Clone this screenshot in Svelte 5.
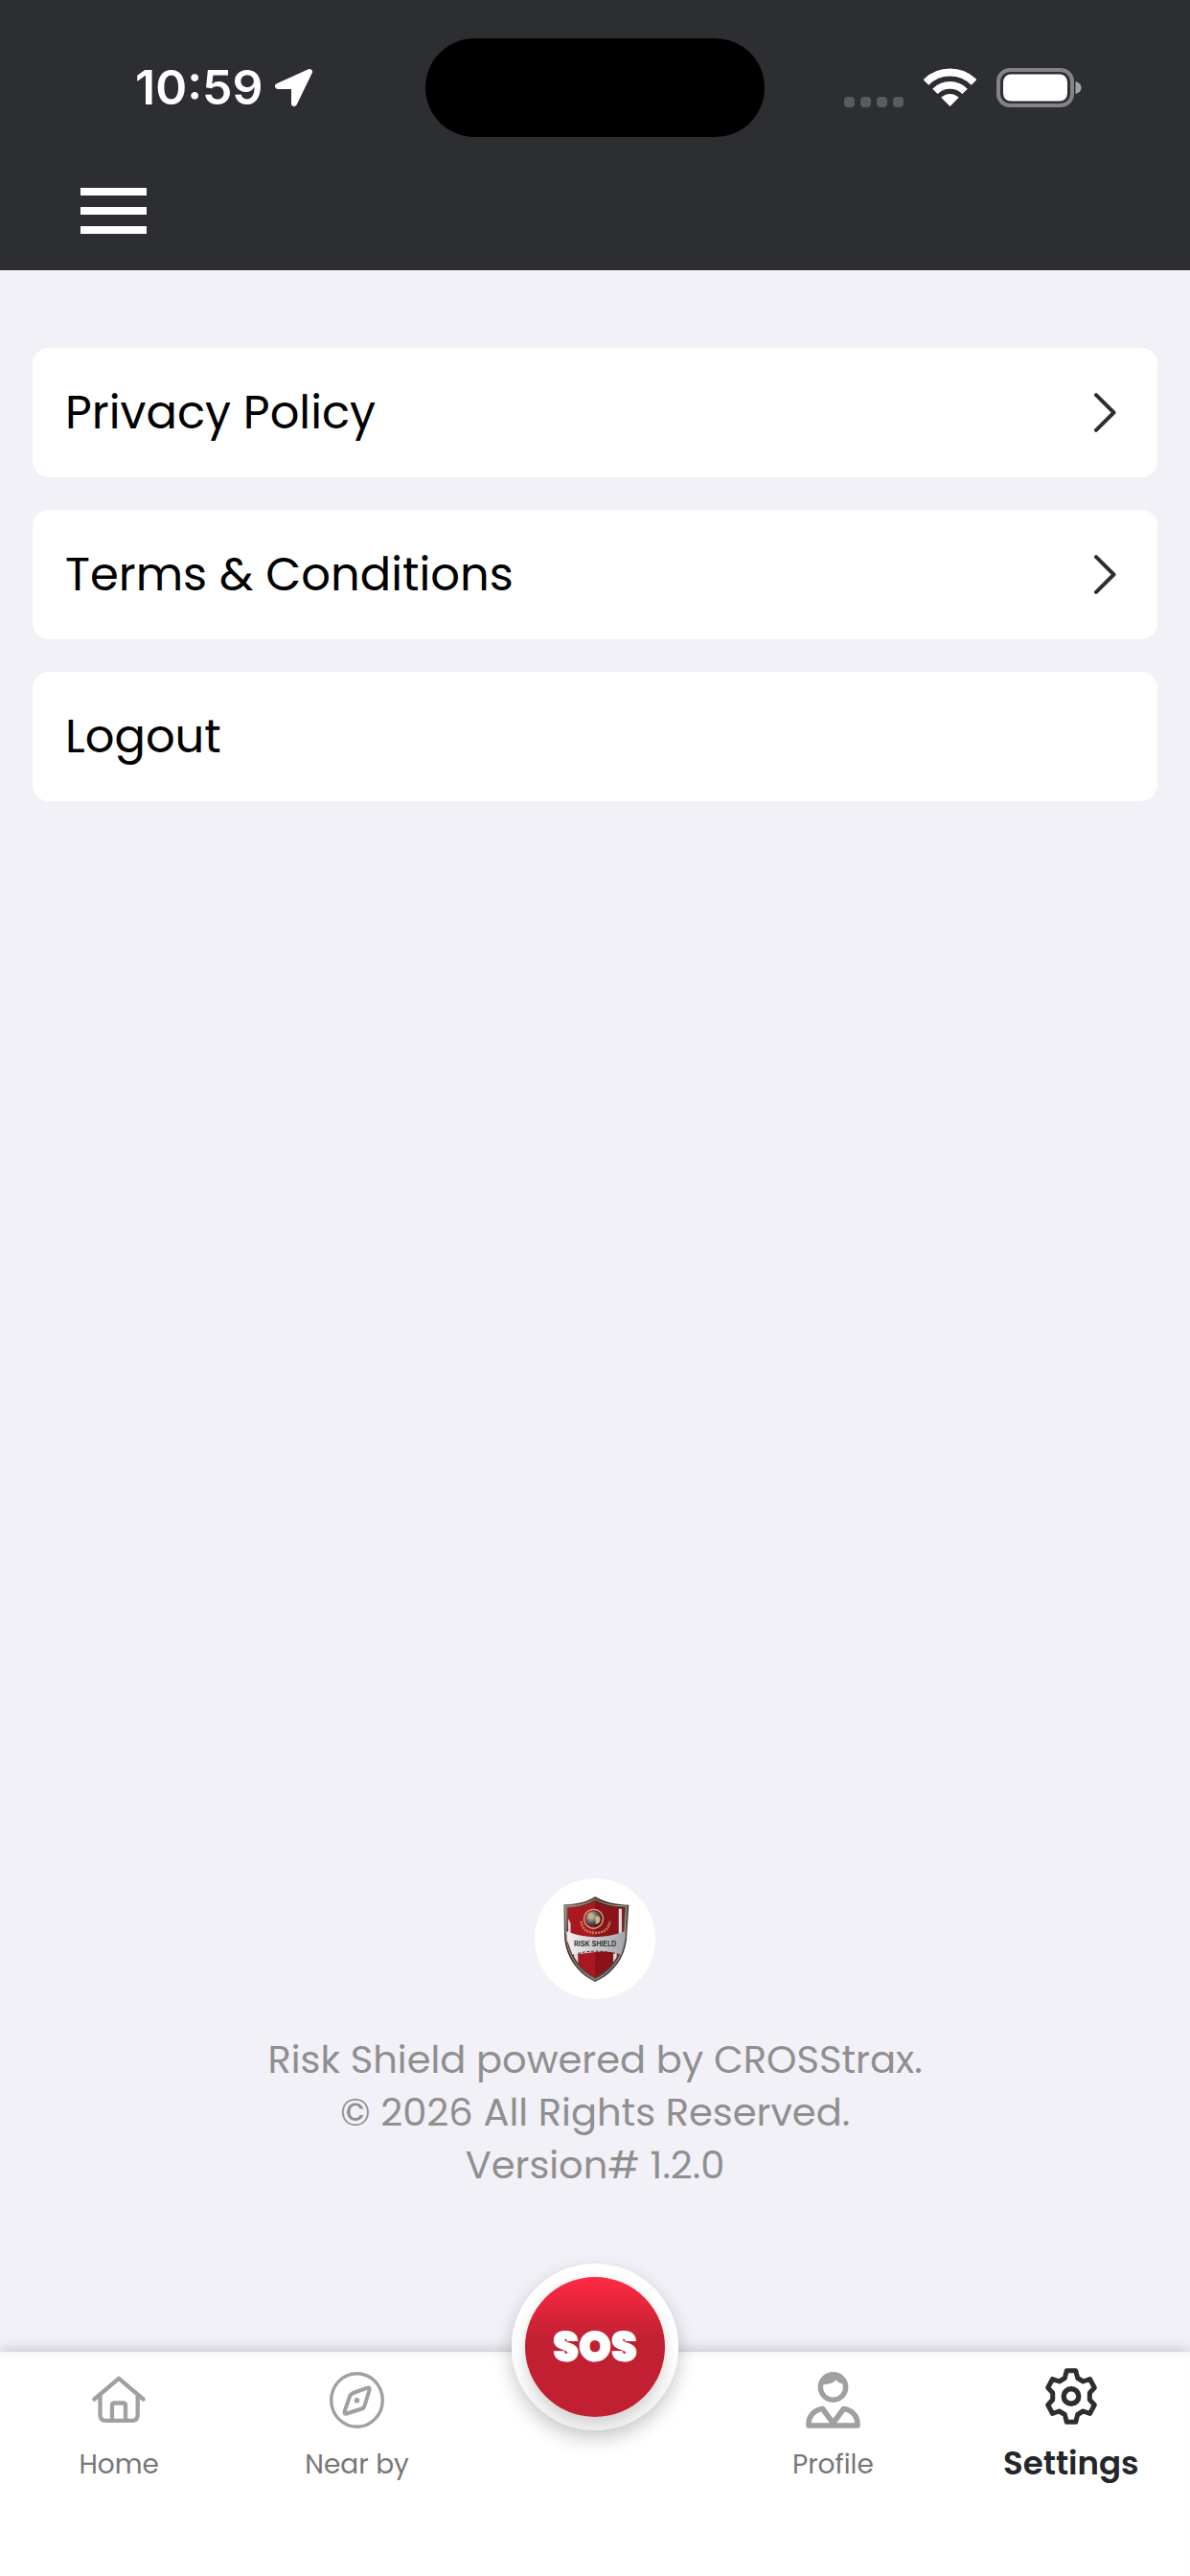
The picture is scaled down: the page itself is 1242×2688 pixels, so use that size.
<script lang="ts">
	const rows = [
		{ label: 'Privacy Policy', href: '#privacy' },
		{ label: 'Terms & Conditions', href: '#terms' }
	];
</script>

<svelte:head>
	<title>Settings</title>
</svelte:head>

<div class="app">
	<header>
		<div class="status">
			<div class="status-left">
				<span class="time">10:59</span>
				<svg class="location" viewBox="0 0 39 39" width="39" height="39" aria-hidden="true">
					<path d="M36 3 3 18H20V36Z" />
				</svg>
			</div>
			<div class="island"></div>
			<div class="status-right">
				<div class="signal"><i></i><i></i><i></i><i></i></div>
				<svg class="wifi" viewBox="0 0 55 40" width="55" height="40" aria-hidden="true">
					<path d="M2.4 14.9a35.5 35.5 0 0 1 50.2 0" stroke-width="8" />
					<path d="M11.9 24.4a22 22 0 0 1 31.2 0" stroke-width="7.6" />
					<path class="solid" d="M27.5 40 18.3 30.8a13 13 0 0 1 18.4 0Z" />
				</svg>
				<svg viewBox="0 0 89 41" width="89" height="41" aria-hidden="true">
					<rect x="2" y="2" width="77" height="37" rx="12" fill="none" stroke="#838488" stroke-width="4" />
					<rect x="7" y="6.5" width="67" height="28" rx="8" fill="#fff" />
					<path d="M82.500 14q6 1.500 6 6.500t-6 6.500Z" fill="#a2a3a8" />
				</svg>
			</div>
		</div>
		<button class="menu" type="button" aria-label="Menu">
			<span></span><span></span><span></span>
		</button>
	</header>

	<main>
		{#each rows as row}
			<a class="row" href={row.href}>
				{row.label}
				<svg viewBox="0 0 23 41" width="23" height="41" aria-hidden="true">
					<path d="M2 2.200 20.500 20.500 2 38.800" />
				</svg>
			</a>
		{/each}
		<button class="row" type="button">Logout</button>
	</main>

	<footer>
		<div class="logo">
			<svg viewBox="138 110 214 272" width="71" height="91" role="img" aria-label="Risk Shield">
				<defs>
					<linearGradient id="rim" x1="0" y1="0" x2="1" y2="1">
						<stop offset="0" stop-color="#8a8a8c" />
						<stop offset="0.3" stop-color="#3a2622" />
						<stop offset="0.7" stop-color="#55565a" />
						<stop offset="1" stop-color="#1c1c1e" />
					</linearGradient>
					<linearGradient id="band" x1="0" y1="0" x2="1" y2="0">
						<stop offset="0" stop-color="#f2f2f2" />
						<stop offset="0.5" stop-color="#c9c9cb" />
						<stop offset="1" stop-color="#a3a4a7" />
					</linearGradient>
					<radialGradient id="globe" cx="0.35" cy="0.35" r="0.7">
						<stop offset="0" stop-color="#d8d3cb" />
						<stop offset="0.6" stop-color="#5b5550" />
						<stop offset="1" stop-color="#211d1c" />
					</radialGradient>
					<clipPath id="field">
						<path d="M244 126C217 142 187 146 158 147L159 235C161 295 199 343 244 367C291 343 329 295 331 235L335 147C303 146 271 142 244 126Z" />
					</clipPath>
				</defs>
				<path d="M244 112C217 130 181 136 145 137L147 235C150 306 193 357 244 380C297 357 341 306 344 235L350 138C309 137 273 130 244 112Z" fill="url(#rim)" />
				<path d="M244 120C217 137 184 142 151 142L153 235C156 301 196 350 244 373C294 350 335 301 337 235L342 142C307 142 272 137 244 120Z" fill="none" stroke="#c99877" stroke-width="3" />
				<g clip-path="url(#field)">
					<path d="M150 120H245V375H150Z" fill="#ab1720" />
					<path d="M244 120H340V375H244Z" fill="#8b1219" />
					<path d="M158 178 167 196V230H158ZM177 290H190V326L177 312ZM318 150H328V232H318ZM301 290H312V312L301 326Z" fill="#d9d9da" />
				</g>
				<path d="M154 221Q200 239 244 239T337 221L338 240 326 294Q286 282 244 287T172 294L156 250Z" fill="url(#band)" />
				<path d="M190 291Q244 277 306 291" fill="none" stroke="#4b1518" stroke-width="3" stroke-dasharray="9 5" />
				<circle cx="239" cy="182" r="30" fill="none" stroke="#d0a17f" stroke-width="4" />
				<circle cx="239" cy="182" r="25" fill="url(#globe)" />
				<path d="M222 169q10-10 15 0t-8 12zM244 177q13-10 16 4t-14 18z" fill="#d5ad83" />
				<path d="M200 190q4 36 45 36t45-36" fill="none" stroke="#b98159" stroke-width="8" stroke-dasharray="6 3" />
				<text x="244" y="269" text-anchor="middle">RISK SHIELD</text>
			</svg>
		</div>
		<p>
			Risk Shield powered by CROSStrax.<br />
			© 2026 All Rights Reserved.<br />
			Version# 1.2.0
		</p>
	</footer>

	<nav>
		<a class="tab" href="#home">
			<span class="icon">
				<svg viewBox="0 0 56 50" width="56" height="50" aria-hidden="true">
					<path d="M2.500 24.500 28 2.800 53.500 24.500M8.500 20V41q0 5.800 5.800 5.800h27.600q5.800 0 5.800-5.800V20M21 46V31q0-2.500 2.500-2.500h9q2.500 0 2.500 2.500V46" stroke-width="4.300" />
				</svg>
			</span>
			Home
		</a>
		<a class="tab" href="#nearby">
			<span class="icon">
				<svg viewBox="0 0 57 59" width="57" height="59" aria-hidden="true">
					<ellipse cx="28.500" cy="29.500" rx="26.800" ry="27.800" stroke-width="3.400" />
					<path d="M24.500 22 39.500 16.700Q42.300 16 41.500 19L36.500 35.500 35 38 18 43.500Q14.800 44.300 15.700 41L21.500 24.300Z" stroke-width="4" />
					<circle class="solid" cx="28.500" cy="29.800" r="2.800" />
				</svg>
			</span>
			Near by
		</a>
		<div class="sos-slot">
			<div class="sos-ring">
				<button class="sos" type="button">SOS</button>
			</div>
		</div>
		<a class="tab" href="#profile">
			<span class="icon">
				<svg viewBox="0 0 57 59" width="57" height="59" aria-hidden="true">
					<circle cx="28.500" cy="16" r="13.200" stroke-width="5.400" />
					<path class="solid" d="M16 13Q26 14 31.500 8.500 35 13 41 12.500L36 4H20Z" />
					<path d="M3 54.500C3 46 9 39.500 17.500 38.500L28.500 53.500 39.500 38.500C48 39.500 54 46 54 54.500V56H3Z" stroke-width="5.600" />
				</svg>
			</span>
			Profile
		</a>
		<a class="tab active" href="#settings" aria-current="page">
			<span class="icon">
				<svg viewBox="0 0 54 59" width="54" height="59" aria-hidden="true">
					<path d="M22.300 2.700H31.700L33.700 10.500 39.500 14 46.500 11.500 51.300 20.500 46.300 26V33L51.300 38.500 46.500 47.500 39.500 45 33.700 48.500 31.700 56.300H22.300L20.300 48.500 14.500 45 7.500 47.500 2.700 38.500 7.700 33V26L2.700 20.500 7.500 11.500 14.500 14 20.300 10.500Z" stroke-width="5" />
					<circle cx="27" cy="29.500" r="7.800" stroke-width="5.400" />
				</svg>
			</span>
			Settings
		</a>
	</nav>
</div>

<style>
	:global(body) {
		background: #f2f1f7;
	}
	.app {
		display: flex;
		flex-direction: column;
		min-height: 100vh;
		font-family: Poppins, Inter, sans-serif;
		color: #000;
	}
	header {
		background: #2d2e32;
		padding-bottom: 24px;
	}
	.status {
		display: grid;
		grid-template-columns: 1fr auto 1fr;
		align-items: center;
		height: 182px;
	}
	.status-left,
	.status-right {
		display: flex;
		align-items: center;
	}
	.status-left {
		gap: 12px;
		padding-left: 141px;
	}
	.time {
		font-family: Inter, sans-serif;
		font-size: 50px;
		font-weight: 600;
		line-height: 60px;
		color: #fff;
	}
	.location path {
		fill: #fff;
		stroke: #fff;
		stroke-width: 6;
		stroke-linejoin: round;
	}
	.island {
		width: 354px;
		height: 103px;
		border-radius: 52px;
		background: #000;
	}
	.status-right {
		justify-content: flex-end;
		gap: 21px;
		padding-right: 113px;
	}
	.signal {
		display: flex;
		align-self: flex-end;
		gap: 6px;
	}
	.signal i {
		width: 11px;
		height: 11px;
		border-radius: 4px;
		background: #5a5b5e;
	}
	.wifi path {
		fill: none;
		stroke: #fff;
	}
	.wifi .solid {
		fill: #fff;
		stroke: none;
	}
	.menu {
		display: flex;
		flex-direction: column;
		justify-content: center;
		gap: 12px;
		height: 76px;
		margin-left: 84px;
		padding: 0;
		border: 0;
		background: none;
	}
	.menu span {
		width: 69px;
		height: 8px;
		background: #fff;
	}
	main {
		display: flex;
		flex: 1;
		flex-direction: column;
		gap: 34px;
		padding: 81px 34px;
	}
	.row {
		display: flex;
		align-items: center;
		justify-content: space-between;
		height: 135px;
		padding: 0 43px 0 34px;
		border: 0;
		border-radius: 17px;
		background: #fff;
		color: #000;
		font-family: inherit;
		font-size: 48px;
		text-decoration: none;
	}
	.row path {
		fill: none;
		stroke: #2d2e32;
		stroke-width: 4;
		stroke-linecap: round;
		stroke-linejoin: round;
	}
	footer {
		display: flex;
		flex-direction: column;
		align-items: center;
		gap: 36px;
		padding-bottom: 167px;
	}
	.logo {
		display: flex;
		align-items: center;
		justify-content: center;
		width: 126px;
		height: 126px;
		border-radius: 50%;
		background: #fff;
	}
	.logo text {
		font-family: Inter, sans-serif;
		font-size: 22px;
		font-weight: 600;
		fill: #222;
	}
	footer p {
		margin: 0;
		color: #8f8f8f;
		font-size: 40px;
		line-height: 55px;
		text-align: center;
	}
	nav {
		display: grid;
		grid-template-columns: repeat(5, 1fr);
		height: 234px;
		background: #fff;
		box-shadow:
			0 -3px 12px rgba(45, 46, 50, 0.2),
			inset 0 8px 8px -6px rgba(45, 46, 50, 0.08);
	}
	.tab {
		display: flex;
		flex-direction: column;
		align-items: center;
		gap: 16px;
		padding-top: 20px;
		color: #777;
		font-size: 28px;
		line-height: 44px;
		text-decoration: none;
	}
	.tab.active {
		padding-top: 16px;
		color: #25262a;
		font-size: 34px;
		font-weight: 600;
		line-height: 48px;
	}
	.icon {
		display: flex;
		align-items: center;
		height: 60px;
	}
	.icon svg {
		fill: none;
		stroke: #a0a0a0;
		stroke-linecap: round;
		stroke-linejoin: round;
	}
	.active .icon svg {
		stroke: #2d2e32;
	}
	.icon .solid {
		fill: #a0a0a0;
		stroke: none;
	}
	.sos-slot {
		display: flex;
		justify-content: center;
		align-items: flex-start;
	}
	.sos-ring {
		display: flex;
		align-items: center;
		justify-content: center;
		width: 174px;
		height: 174px;
		margin-top: -92px;
		border-radius: 50%;
		background: linear-gradient(#fff 55%, #f0f0f0);
		box-shadow: 0 8px 20px rgba(0, 0, 0, 0.22);
	}
	.sos {
		width: 146px;
		height: 146px;
		padding: 0;
		border: 0;
		border-radius: 50%;
		background: linear-gradient(#ff2a44, #c02031 45%);
		box-shadow: 0 5px 14px rgba(0, 0, 0, 0.16);
		color: #fff;
		font-family: inherit;
		font-size: 43px;
		font-weight: 900;
		-webkit-text-stroke: 1px #fff;
	}
</style>
